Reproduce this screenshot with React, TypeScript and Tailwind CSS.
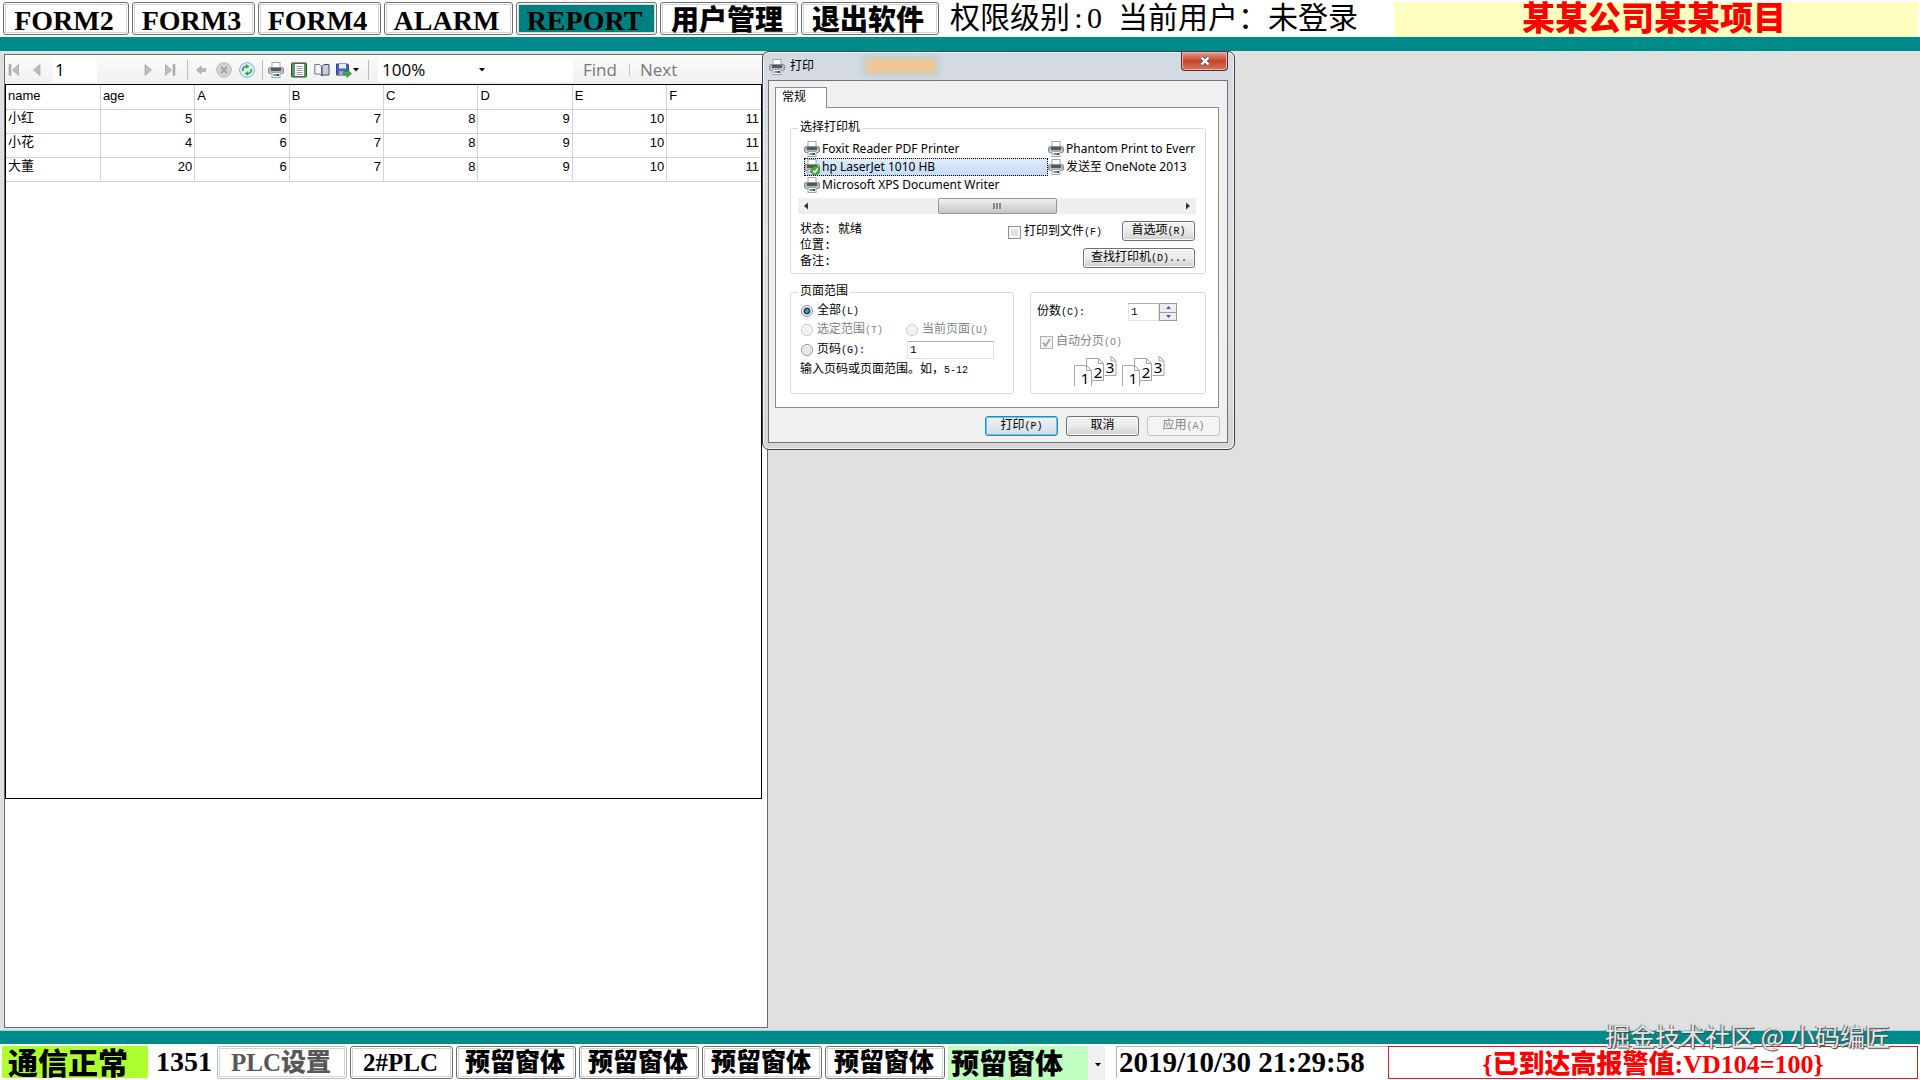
import React from "react";

const HEAVY = "font-['Liberation_Serif','Noto_Sans_CJK_SC',serif] font-black";
const SONG = "font-['Liberation_Mono','Noto_Sans_CJK_SC',monospace]";
const SEGOE = "font-['Open_Sans','Noto_Sans_CJK_SC',sans-serif]";

const raised =
  "rounded-[3px] border border-[#707070] bg-white shadow-[inset_0_0_0_1px_#fff,inset_0_0_0_2px_#d4d4d4] whitespace-nowrap";

const winButton =
  "flex h-5 items-center justify-center rounded-[3px] border border-[#707070] bg-linear-to-b from-[#f3f3f3] via-[#ebebeb] to-[#cfcfcf] text-xs text-black shadow-[inset_0_0_0_1px_#fcfcfc]";

function Printer({ checked = false }: { checked?: boolean }) {
  return (
    <svg className="size-4 shrink-0" viewBox="0 0 16 16" aria-hidden="true">
      <rect x="4" y="0.5" width="8" height="6" fill="#fff" stroke="#a5a5a5" />
      <rect x="0.5" y="5.5" width="15" height="6" rx="1.5" fill="#b4b7bb" stroke="#8d9094" />
      <rect x="3" y="6" width="10" height="3" fill="#55585c" />
      <path d="M2 10.500h12" stroke="#dfe1e3" />
      <rect x="4" y="10.5" width="8" height="5" fill="#fff" stroke="#a5a5a5" />
      <rect x="5.5" y="12" width="3" height="2" fill="#4f9fc4" />
      <rect x="8.5" y="12" width="2.5" height="2" fill="#24506b" />
      {checked && (
        <>
          <circle cx="11.5" cy="11.5" r="4.3" fill="#3fae3c" stroke="#1f7d25" strokeWidth="0.6" />
          <path d="M9.3 11.6l1.6 1.9 2.8-4" fill="none" stroke="#fff" strokeWidth="1.4" />
        </>
      )}
    </svg>
  );
}

function Nav({ kind }: { kind: "first" | "prev" | "next" | "last" }) {
  const flip = kind === "next" || kind === "last";
  const bar = kind === "first" || kind === "last";
  return (
    <svg className={flip ? "h-4 w-3 rotate-180" : "h-4 w-3"} viewBox="0 0 12 16" aria-hidden="true">
      {bar && <rect x="1" y="2.5" width="2" height="11" fill="#b4b4b4" stroke="#999" strokeWidth="0.5" />}
      <path d={bar ? "M10.5 2.5v11L4.5 8z" : "M9 2.5v11L2.5 8z"} fill="#bdbdbd" stroke="#a2a2a2" strokeWidth="0.7" />
    </svg>
  );
}

function Caret() {
  return (
    <svg className="h-1 w-2 shrink-0" viewBox="0 0 8 4" aria-hidden="true">
      <path d="M1 0h6L4 3.5z" fill="#000" />
    </svg>
  );
}

function Sep() {
  return <span className="h-5 w-px shrink-0 bg-[#bdbdbd]" />;
}

function TopBar() {
  const items = [
    { t: "FORM2", w: "w-[126px]" },
    { t: "FORM3", w: "w-[123px]" },
    { t: "FORM4", w: "w-[123px]" },
    { t: "ALARM", w: "w-[129px]" },
    { t: "REPORT", w: "w-[141px]" },
    { t: "用户管理", w: "w-[138px]" },
    { t: "退出软件", w: "w-[138px]" },
  ];
  return (
    <header className="flex h-[37px] items-start bg-white pl-[3px] pt-[2px]">
      <nav className="flex gap-[3px]">
        {items.map((i) => (
          <button
            key={i.t}
            type="button"
            className={`${raised} ${HEAVY} ${i.w} h-[33px] p-[2px] text-[28px]`}
          >
            <span
              className={
                i.t === "REPORT"
                  ? "flex h-full items-center justify-center bg-[#008080] pr-1 pt-1"
                  : "flex h-full items-center justify-center pr-1 pt-1"
              }
            >
              {i.t}
            </span>
          </button>
        ))}
      </nav>
      <p className="ml-[11px] flex h-[31px] items-center whitespace-nowrap font-['Liberation_Serif','Noto_Sans_CJK_SC',serif] text-[30px] font-normal text-black">
        <span>权限级别</span>
        <span className="w-[17px] text-center">:</span>
        <span className="mr-4">0</span>
        <span>当前用户：</span>
        <span>未登录</span>
      </p>
      <h1
        className={`${HEAVY} ml-9 mr-[2px] flex h-[35px] flex-1 items-center justify-center bg-[#ffffbf] pr-1 text-[33px] text-[#ff0000]`}
      >
        某某公司某某项目
      </h1>
    </header>
  );
}

function Toolbar() {
  return (
    <div className={`${SEGOE} flex h-[29px] shrink-0 items-center bg-linear-to-b from-[#fcfcfc] to-[#f0f0f0] pl-[3px] text-[17px] text-black`}>
      <button type="button" aria-label="First page"><Nav kind="first" /></button>
      <button type="button" aria-label="Previous page" className="ml-[11px]"><Nav kind="prev" /></button>
      <input aria-label="Page" defaultValue="1" className="ml-[10px] h-6 w-11 bg-white px-[2px] outline-none" />
      <button type="button" aria-label="Next page" className="ml-[45px]"><Nav kind="next" /></button>
      <button type="button" aria-label="Last page" className="ml-[10px] mr-[11px]"><Nav kind="last" /></button>
      <Sep />
      <button type="button" aria-label="Back" className="ml-2">
        <svg className="h-4 w-[10px]" viewBox="0 0 10 16" aria-hidden="true">
          <path d="M0.5 8L5 4v2.5h4.5v3H5V12z" fill="#b9b9b9" stroke="#9b9b9b" strokeWidth="0.6" />
        </svg>
      </button>
      <button type="button" aria-label="Stop" className="ml-[10px]">
        <svg className="size-4" viewBox="0 0 16 16" aria-hidden="true">
          <circle cx="8" cy="8" r="7.3" fill="#d4d4d4" stroke="#bababa" />
          <path d="M5 5l6 6M11 5l-6 6" stroke="#a2a2a2" strokeWidth="2" />
        </svg>
      </button>
      <button type="button" aria-label="Refresh" className="ml-[7px] mr-[7px]">
        <svg className="size-4" viewBox="0 0 16 16" aria-hidden="true">
          <circle cx="8" cy="8" r="7.4" fill="#dcecf8" stroke="#7fb2de" strokeWidth="1" />
          <path d="M3.8 9V7.5A3 3 0 0 1 7 4.5" fill="none" stroke="#3da63a" strokeWidth="1.7" />
          <path d="M6.8 2l3.6 2.500-3.600 2.500z" fill="#3da63a" />
          <path d="M12.2 7v1.5a3 3 0 0 1-3.2 3" fill="none" stroke="#3da63a" strokeWidth="1.7" />
          <path d="M9.2 14l-3.600-2.500 3.600-2.500z" fill="#3da63a" />
        </svg>
      </button>
      <Sep />
      <button type="button" aria-label="Print" className="ml-[5px]"><Printer /></button>
      <button type="button" aria-label="Print layout" className="ml-[7px]">
        <svg className="size-4" viewBox="0 0 16 16" aria-hidden="true">
          <rect x="0.5" y="1" width="15" height="14" rx="1" fill="#5f9463" stroke="#2c4a30" />
          <rect x="4" y="2" width="9" height="12" fill="#fff" />
          <path d="M5.500 4.5h6M5.500 6.5h6M5.500 8.5h6M5.500 10.5h6M5.500 12.5h6" stroke="#8b95a0" strokeWidth="0.9" />
        </svg>
      </button>
      <button type="button" aria-label="Page setup" className="ml-[7px]">
        <svg className="size-4" viewBox="0 0 16 16" aria-hidden="true">
          <path d="M0.8 2.5h4.5l2.2 2v9l-2.2-1.5H0.8z" fill="#f5f5f8" stroke="#6d7280" />
          <path d="M8 4.5q1-2 3-2h4v10.500H11q-2 0-3 1z" fill="#c5cfe0" stroke="#454b5c" />
        </svg>
      </button>
      <button type="button" aria-label="Export" className="ml-[6px] mr-2 flex items-center">
        <svg className="size-4" viewBox="0 0 16 16" aria-hidden="true">
          <path d="M0.5 2h11l1 1v10h-12z" fill="#5062b8" stroke="#35417f" />
          <rect x="3" y="2" width="7" height="4.500" fill="#e8ecf8" />
          <rect x="3" y="9" width="6" height="4" fill="#9aa5d8" />
          <path d="M7.500 9.500h3.500V7.500l4.500 4-4.500 4v-2.500H7.500z" fill="#3fae3c" stroke="#217a22" strokeWidth="0.6" />
        </svg>
        <Caret />
      </button>
      <Sep />
      <button type="button" aria-label="Zoom" className="ml-[9px] flex h-6 w-[120px] items-center justify-between bg-white pl-1 pr-3">
        <span>100%</span>
        <Caret />
      </button>
      <input aria-label="Search text" className="h-6 w-[75px] bg-white outline-none" />
      <button type="button" className="ml-[10px] text-[#787878]">Find</button>
      <span className="ml-3 h-3 w-px bg-[#c4c4c4]" />
      <button type="button" className="ml-[10px] text-[#787878]">Next</button>
    </div>
  );
}

function Report() {
  const heads = ["name", "age", "A", "B", "C", "D", "E", "F"];
  const rows = [
    ["小红", "5", "6", "7", "8", "9", "10", "11"],
    ["小花", "4", "6", "7", "8", "9", "10", "11"],
    ["大董", "20", "6", "7", "8", "9", "10", "11"],
  ];
  return (
    <section className="flex w-2/5 flex-col pl-1 pt-[3px] pb-[2px]">
      <div className="flex flex-1 flex-col border border-[#6b6b6b] bg-white">
        <Toolbar />
        <div className="mr-[5px] flex-[25] border border-black">
          <table className="w-full table-fixed border-collapse font-['Liberation_Sans','Noto_Sans_CJK_SC',sans-serif] text-[13px] leading-4 text-black">
            <thead>
              <tr className="h-6">
                {heads.map((h) => (
                  <th key={h} className="border-b border-r border-[#d3d3d3] px-[2px] pb-[2px] text-left font-normal last:border-r-0">
                    {h}
                  </th>
                ))}
              </tr>
            </thead>
            <tbody>
              {rows.map((r) => (
                <tr key={r[0]} className="h-6">
                  {r.map((c, i) => (
                    <td
                      key={i}
                      className={
                        i === 0
                          ? "border-b border-r border-[#d3d3d3] px-[2px] pb-[7px] text-left"
                          : "border-b border-r border-[#d3d3d3] px-[2px] pb-1 text-right last:border-r-0"
                      }
                    >
                      {c}
                    </td>
                  ))}
                </tr>
              ))}
            </tbody>
          </table>
        </div>
        <div className="flex-[8]" />
      </div>
    </section>
  );
}

function K({ children }: { children: React.ReactNode }) {
  return <span className="text-[10px]">{children}</span>;
}

const radio =
  "size-3 shrink-0 appearance-none rounded-full border border-[#8e8f8f] bg-[#e6e6e6] shadow-[inset_0_0_0_1px_#fff] checked:bg-[radial-gradient(circle,#5cc3ea_0,#12435f_3px,#e9eef2_4px)] disabled:border-[#c4c4c4] disabled:bg-[#f0f0f0]";

function Collated() {
  return (
    <svg className="h-[30px] w-[43px]" viewBox="0 0 43 30" fontSize="15" fontFamily="Noto Sans" textAnchor="middle" aria-hidden="true">
      <path d="M30.500 19.500h11.500V5l-5-5" fill="#fff" stroke="#a5a5a5" />
      <path d="M37 0v5h5" fill="none" stroke="#a5a5a5" />
      <path d="M12.500 2.500h12l5 5v17h-17z" fill="#fff" stroke="#a5a5a5" />
      <path d="M24.500 2.500v5h5" fill="none" stroke="#a5a5a5" />
      <path d="M0.500 30V9.500h12l5 5V30" fill="#fff" stroke="#a5a5a5" />
      <path d="M12.500 9.500v5h5" fill="none" stroke="#a5a5a5" />
      <text x="36" y="17">3</text>
      <text x="24" y="22">2</text>
      <text x="11" y="28">1</text>
    </svg>
  );
}

function Item({ name, selected = false }: { name: string; selected?: boolean }) {
  return (
    <button
      type="button"
      role="option"
      aria-selected={selected}
      className={
        selected
          ? "flex h-[18px] w-full items-center gap-[2px] whitespace-nowrap bg-linear-to-b from-[#e3eefc] to-[#c3dafa] outline-1 -outline-offset-1 outline-dotted outline-black"
          : "flex h-[18px] w-full items-center gap-[2px] whitespace-nowrap"
      }
    >
      <Printer checked={selected} />
      {name}
    </button>
  );
}

function PrintDialog() {
  return (
    <div
      role="dialog"
      aria-label="打印"
      className={`${SONG} absolute left-[762px] top-0 w-[473px] rounded-[7px] border border-[#3c4146] bg-linear-to-b from-[#d3dbe2] via-[#dfe2e5] to-[#d4d6d8] px-[5px] pb-[6px] text-xs leading-4 text-black shadow-[inset_0_0_0_1px_#f2f5f7]`}
    >
      <div className="flex h-7 items-start">
        <div className="flex h-7 items-center gap-[5px] pl-px pt-[2px]">
          <Printer />
          <span>打印</span>
        </div>
        <span className="ml-[52px] mt-[7px] h-[14px] w-[70px] bg-[#f2c592] shadow-[0_0_5px_3px_#b9cad6] blur-[2px]" />
        <button
          type="button"
          aria-label="Close"
          className="ml-auto mr-px flex h-[19px] w-[47px] items-center justify-center rounded-b-[4px] border border-t-0 border-[#5b2a26] bg-linear-to-b from-[#e5a092] via-[#c4432c] to-[#d9755c] shadow-[inset_0_0_0_1px_#eab5a8]"
        >
          <svg className="h-[10px] w-3" viewBox="0 0 12 10" aria-hidden="true">
            <path d="M2.500 1.500l7 7M9.500 1.500l-7 7" stroke="#54606c" strokeWidth="4" />
            <path d="M2.500 1.500l7 7M9.500 1.500l-7 7" stroke="#fff" strokeWidth="2.400" />
          </svg>
        </button>
      </div>
      <div className="mr-px border border-[#6f7377] bg-[#f0f0f0] pb-[6px] pl-[6px] pr-[7px] pt-[6px]">
        <button
          type="button"
          role="tab"
          aria-selected="true"
          className="relative -mb-px block h-[21px] w-[52px] border border-b-0 border-[#898c95] bg-white pl-[6px] text-left"
        >
          常规
        </button>
        <div className="mr-px border border-[#898c95] bg-white pb-[13px] pl-[14px] pr-3 pt-3">
          <fieldset className="rounded-[3px] border border-[#dcdcdc] px-[7px] pb-[3px]">
            <legend className="px-[2px]">选择打印机</legend>
            <div role="listbox" aria-label="选择打印机" className="ml-[6px] mr-[2px] mt-1 flex overflow-hidden font-['Noto_Sans','Noto_Sans_CJK_SC',sans-serif] text-[12px]">
              <div className="w-[244px] shrink-0">
                <Item name="Foxit Reader PDF Printer" />
                <Item name="hp LaserJet 1010 HB" selected />
                <Item name="Microsoft XPS Document Writer" />
              </div>
              <div className="min-w-0 flex-1 overflow-hidden">
                <Item name="Phantom Print to Everr" />
                <Item name="发送至 OneNote 2013" />
              </div>
            </div>
            <div className="mr-[2px] mt-1 flex h-4 items-center bg-[#efefef]">
              <button type="button" aria-label="Scroll left" className="flex w-4 justify-center">
                <svg className="h-2 w-1" viewBox="0 0 4 8" aria-hidden="true"><path d="M4 0.500v7L0 4z" fill="#333" /></svg>
              </button>
              <div className="flex h-full flex-1 justify-center">
                <div className="flex h-4 w-[119px] items-center justify-center gap-px rounded-[2px] border border-[#979797] bg-linear-to-b from-[#f1f1f1] to-[#c6c6c6]">
                  <span className="h-[6px] w-[2px] bg-[#888]" />
                  <span className="h-[6px] w-[2px] bg-[#888]" />
                  <span className="h-[6px] w-[2px] bg-[#888]" />
                </div>
              </div>
              <button type="button" aria-label="Scroll right" className="flex w-4 justify-center">
                <svg className="h-2 w-1" viewBox="0 0 4 8" aria-hidden="true"><path d="M0 0.500v7L4 4z" fill="#333" /></svg>
              </button>
            </div>
            <div className="mt-[6px] flex justify-between pl-[2px] pr-[3px]">
              <dl className="grid grid-cols-[38px_1fr] content-start pt-[2px]">
                <dt>状态:</dt><dd>就绪</dd>
                <dt>位置:</dt><dd />
                <dt>备注:</dt><dd />
              </dl>
              <div className="flex flex-col items-end gap-[7px]">
                <div className="flex items-center gap-5">
                  <label className="flex items-center gap-[3px] pt-1">
                    <input type="checkbox" className="size-[13px] appearance-none border border-[#8e8f8f] bg-[#e2e2e2] shadow-[inset_0_0_0_2px_#f7f7f7]" />
                    <span>打印到文件<K>(F)</K></span>
                  </label>
                  <button type="button" className={`${winButton} w-[73px]`}><span>首选项<K>(R)</K></span></button>
                </div>
                <button type="button" className={`${winButton} w-28`}><span>查找打印机<K>(D)...</K></span></button>
              </div>
            </div>
          </fieldset>

          <div className="mt-[10px] flex items-stretch gap-4">
            <fieldset className="w-[224px] rounded-[3px] border border-[#dcdcdc] px-[7px] pb-[14px]">
              <legend className="px-[2px]">页面范围</legend>
              <label className="mt-[3px] flex h-4 items-center gap-1 pl-[3px]">
                <input type="radio" name="range" defaultChecked className={radio} />
                <span>全部<K>(L)</K></span>
              </label>
              <div className="mt-[3px] flex h-4 text-[#838383]">
                <label className="flex w-[105px] items-center gap-1 pl-[3px]">
                  <input type="radio" name="range" disabled className={radio} />
                  <span>选定范围<K>(T)</K></span>
                </label>
                <label className="flex items-center gap-1 pl-[3px]">
                  <input type="radio" name="range" disabled className={radio} />
                  <span>当前页面<K>(U)</K></span>
                </label>
              </div>
              <div className="mt-[3px] flex h-[18px] items-center">
                <label className="flex w-[109px] items-center gap-1 pl-[3px]">
                  <input type="radio" name="range" className={radio} />
                  <span>页码<K>(G):</K></span>
                </label>
                <input aria-label="页码" defaultValue="1" className="h-[18px] w-[87px] border border-[#dfe3ea] border-t-[#abadb3] bg-white px-[2px] text-[11px]" />
              </div>
              <p className="mt-[3px] whitespace-nowrap pl-[2px]">输入页码或页面范围。如，<K>5-12</K></p>
            </fieldset>
            <fieldset className="mt-2 flex-1 rounded-[3px] border border-[#dcdcdc] px-[6px]">
              <div className="mt-[10px] flex h-[18px] items-center">
                <label htmlFor="copies" className="w-[91px]">份数<K>(C):</K></label>
                <input id="copies" defaultValue="1" className="h-[18px] w-[31px] border border-[#dfe3ea] border-t-[#abadb3] bg-white px-[2px] text-[11px]" />
                <div className="flex h-[18px] w-[18px] flex-col border border-[#9b9b9b] bg-[#9b9b9b]">
                  <button type="button" aria-label="More copies" className="mb-px flex flex-1 items-center justify-center bg-[#eee]">
                    <svg className="h-[3px] w-[5px]" viewBox="0 0 5 3" aria-hidden="true"><path d="M0 3h5L2.500 0z" fill="#4b57a5" /></svg>
                  </button>
                  <button type="button" aria-label="Fewer copies" className="flex flex-1 items-center justify-center bg-[#eee]">
                    <svg className="h-[3px] w-[5px]" viewBox="0 0 5 3" aria-hidden="true"><path d="M0 0h5L2.500 3z" fill="#4b57a5" /></svg>
                  </button>
                </div>
              </div>
              <label className="mt-[13px] flex h-4 items-center gap-[3px] pl-[3px] text-[#838383]">
                <input type="checkbox" disabled defaultChecked className="peer sr-only" />
                <span className="flex size-[13px] items-center justify-center border border-[#b1b1b1] bg-[#f4f4f4]">
                  <svg className="size-[9px]" viewBox="0 0 9 9" aria-hidden="true"><path d="M1 4.500l2.500 3.500L8 1" fill="none" stroke="#a5a5a5" strokeWidth="1.800" /></svg>
                </span>
                <span>自动分页<K>(O)</K></span>
              </label>
              <div className="mt-[6px] flex gap-[5px] pl-[37px]">
                <Collated />
                <Collated />
              </div>
            </fieldset>
          </div>
        </div>
        <div className="mt-2 flex justify-end gap-2">
          <button type="button" className="flex h-5 w-[73px] items-center justify-center rounded-[3px] border border-[#3c7fb1] bg-linear-to-b from-[#f3f3f3] to-[#cfdde6] text-xs shadow-[inset_0_0_0_1px_#56cdf5]">
            <span>打印<K>(P)</K></span>
          </button>
          <button type="button" className={`${winButton} w-[73px]`}>取消</button>
          <button type="button" disabled className="flex h-5 w-[73px] items-center justify-center rounded-[3px] border border-[#c3c6c9] bg-[#f4f4f4] text-xs text-[#838383]">
            <span>应用<K>(A)</K></span>
          </button>
        </div>
      </div>
    </div>
  );
}

function BottomBar() {
  const items = [
    { t: "PLC设置", w: "w-[130px] border-[#b8bcbf] text-[#585858]" },
    { t: "2#PLC", w: "w-[103px] border-[#707070] text-black" },
    { t: "预留窗体", w: "w-[120px] border-[#707070] text-black" },
    { t: "预留窗体", w: "w-[120px] border-[#707070] text-black" },
    { t: "预留窗体", w: "w-[120px] border-[#707070] text-black" },
    { t: "预留窗体", w: "w-[120px] border-[#707070] text-black" },
  ];
  return (
    <footer className={`${HEAVY} flex h-9 items-start whitespace-nowrap bg-white pl-[2px] pt-[2px] text-black`}>
      <div className="flex h-8 w-[146px] items-center bg-[#adff2f] pl-[6px] pt-[2px] text-[30px]">通信正常</div>
      <span className="ml-2 flex h-8 w-[61px] items-center text-[28px]">1351</span>
      <div className="flex gap-[3px]">
        {items.map((i, n) => (
          <button
            key={n}
            type="button"
            className={`flex h-[33px] items-center justify-center rounded-[3px] border bg-white pr-[2px] pt-px text-[25px] shadow-[inset_0_0_0_1px_#fff,inset_0_0_0_2px_#d4d4d4] ${i.w}`}
          >
            {i.t}
          </button>
        ))}
      </div>
      <button type="button" className="ml-[3px] flex h-[34px] w-[157px] items-center bg-linear-to-r from-[#c0ffc0] from-[140px] to-[#f0f0f0] to-[140px] pt-1 text-[28px]">
        <span className="w-[146px] pl-[3px] text-left">预留窗体</span>
        <Caret />
      </button>
      <time className="ml-[11px] flex h-8 w-[272px] items-center border-l border-t border-[#b0b0b0] pl-[2px] text-[29px]">
        2019/10/30 21:29:58
      </time>
      <div className="mr-[2px] flex h-[33px] flex-1 items-center justify-center border border-[#d62020] pt-[3px] text-[26px] text-[#ff0000]">
        {"{已到达高报警值:VD104=100}"}
      </div>
    </footer>
  );
}

export default function App() {
  return (
    <div className="relative flex min-h-screen flex-col bg-[#e0e0e0]">
      <TopBar />
      <div className="h-[14px] bg-[#008b8b]" />
      <main className="relative flex flex-1">
        <Report />
        <PrintDialog />
      </main>
      <div className="h-[14px] border-t border-[#8fdcdc] bg-[#008b8b]" />
      <BottomBar />
      <p className="pointer-events-none absolute bottom-[29px] right-[30px] whitespace-nowrap font-['Noto_Sans_CJK_SC',sans-serif] text-[25px] leading-8 text-[#e6e6e6] [text-shadow:1px_1px_1px_#444,-1px_0_1px_#666]">
        掘金技术社区 @ 小码编匠
      </p>
    </div>
  );
}
